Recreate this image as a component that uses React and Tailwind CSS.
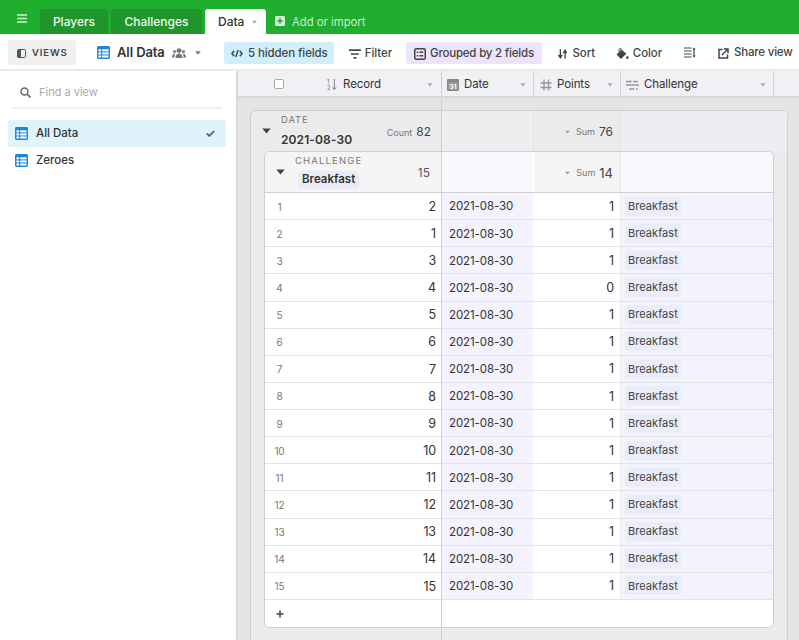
import React from "react";

const Caret = ({ className = "" }) => (
  <svg viewBox="0 0 8 5" className={className}><path d="M0.3 0.3h7.4L4 4.8z" fill="currentColor" /></svg>
);

const TableIcon = ({ className = "" }) => (
  <svg viewBox="0 0 14 14" className={className}>
    <rect x="0" y="0" width="14" height="14" rx="1.5" fill="#1f86dc" />
    <rect x="1.5" y="3.6" width="3" height="2.2" fill="#fff" />
    <rect x="5.6" y="3.6" width="6.9" height="2.2" fill="#fff" />
    <rect x="1.5" y="6.9" width="3" height="2.2" fill="#fff" />
    <rect x="5.6" y="6.9" width="6.9" height="2.2" fill="#fff" />
    <rect x="1.5" y="10.2" width="3" height="2.2" fill="#fff" />
    <rect x="5.6" y="10.2" width="6.9" height="2.2" fill="#fff" />
  </svg>
);

const ToolButton = ({ icon, label, className = "" }) => (
  <div className={`flex items-center h-[22px] pt-[2px] shrink-0 whitespace-nowrap rounded-[3px] text-[11.5px] font-medium text-[#444] ${className}`}>
    {icon}
    <span>{label}</span>
  </div>
);

const HeaderCell = ({ icon, label, className = "" }) => (
  <div className={`flex items-center pt-[2px] border-r border-[#d5d5d5] text-[11.5px] tracking-[-0.1px] text-[#333] ${className}`}>
    {icon}
    <span>{label}</span>
    <Caret className="w-[6px] h-[4px] ml-auto mr-[7px] text-[#b0b0b0]" />
  </div>
);

const records = [2, 1, 3, 4, 5, 6, 7, 8, 9, 10, 11, 12, 13, 14, 15];
const points = [1, 1, 1, 0, 1, 1, 1, 1, 1, 1, 1, 1, 1, 1, 1];

const Row = ({ n, rec, pts }) => (
  <div className="flex h-[27.13px] border-b border-[#e3e3e3] text-[11.5px] tracking-[-0.1px] text-[#333] bg-white">
    <div className="w-[177px] flex items-center justify-between pt-[2px] pl-[7px] pr-[5px] border-r border-[#cfcfcf]">
      <span className="w-[15px] text-center text-[10px] text-[#777]">{n}</span>
      <span className="text-[12.5px] leading-none">{rec}</span>
    </div>
    <div className="w-[92px] flex items-center pt-[2px] pl-[7px] bg-[#f4f2fd] border-r-[1px] border-white">2021-08-30</div>
    <div className="w-[87px] flex items-center justify-end pt-[2px] pr-[6px] border-r border-[#e9e9e9] text-[12.5px]">{pts}</div>
    <div className="flex-1 flex items-center pl-[4px] bg-[#f4f2fd]">
      <span className="h-[19px] flex items-center px-[3px] rounded-[3px] bg-[#eaedf9] text-[11px] tracking-[0.05px] text-[#444]">Breakfast</span>
    </div>
  </div>
);

export default function App() {
  return (
    <div className="w-[799px] h-[640px] overflow-hidden flex flex-col bg-white font-['Inter',sans-serif]">
      {/* Green bar */}
      <div className="h-[34px] shrink-0 bg-[#20ae2f] flex items-end">
        <div className="w-[40px] h-[34px] flex items-center justify-center pt-[9px] pb-[6px]">
          <svg viewBox="0 0 10 9" className="w-[10px] h-[9px] ml-[3px]"><path d="M0 1h10M0 4.500h10M0 8h10" stroke="#d6f2d9" strokeWidth="1.3" /></svg>
        </div>
        <div className="w-[68px] h-[25px] pt-[1px] rounded-t-[3px] bg-[#1e962b] flex items-center justify-center text-[12px] font-medium text-[#eef9ef]">Players</div>
        <div className="w-[91px] h-[25px] pt-[1px] ml-[3px] rounded-t-[3px] bg-[#1e962b] flex items-center justify-center text-[12px] font-medium text-[#eef9ef]">Challenges</div>
        <div className="w-[61px] h-[25px] pt-[1px] ml-[3px] rounded-t-[3px] bg-white flex items-center pl-[13px] text-[12px] font-medium text-[#333]">
          Data
          <Caret className="w-[5px] h-[4px] ml-[8px] text-[#999]" />
        </div>
        <div className="h-[25px] pt-[1px] ml-[9px] flex items-center text-[11.3px] text-[#c9eccc]">
          <svg viewBox="0 0 10 10" className="w-[10px] h-[10px] mr-[7px] -mt-[2px]">
            <rect width="10" height="10" rx="1.5" fill="#d6f2d9" />
            <path d="M5 2.200v5.600M2.200 5h5.600" stroke="#20ae2f" strokeWidth="1.6" />
          </svg>
          Add or import
        </div>
      </div>

      {/* Toolbar */}
      <div className="h-[37px] shrink-0 flex items-center pt-[2px] border-b-2 border-[#e9e9e9] bg-white tracking-[-0.1px]">
        <div className="ml-[8px] w-[68px] h-[25px] pt-[1px] shrink-0 rounded-[3px] bg-[#f0f0f0] flex items-center pl-[9px]">
          <svg viewBox="0 0 9 9" className="w-[9px] h-[9px]">
            <rect x="0.500" y="0.500" width="8" height="8" rx="1.2" fill="none" stroke="#555" />
            <rect x="0.500" y="0.500" width="3.500" height="8" fill="#555" />
          </svg>
          <span className="ml-[6px] text-[9.5px] font-semibold tracking-[0.9px] text-[#444]">VIEWS</span>
        </div>
        <TableIcon className="ml-[21px] w-[13px] h-[13px] shrink-0" />
        <span className="ml-[7px] w-[48px] shrink-0 whitespace-nowrap text-[13px] font-semibold text-[#333]">All Data</span>
        <svg viewBox="0 0 14 10" className="ml-[7px] mt-[1px] w-[14px] h-[10px] shrink-0">
          <circle cx="7" cy="2.600" r="2.400" fill="#777" />
          <circle cx="2.600" cy="3.600" r="1.700" fill="#888" />
          <circle cx="11.400" cy="3.600" r="1.700" fill="#888" />
          <path d="M3.500 10c0-3 1.500-4.600 3.500-4.600s3.500 1.600 3.500 4.600zM0 9.500c0-2.400 1-3.700 2.600-3.700l.6.300C2.600 7 2.500 8.300 2.500 9.500zM14 9.500c0-2.400-1-3.700-2.600-3.700l-.6.300c.6.900.7 2.200.7 3.400z" fill="#777" />
        </svg>
        <Caret className="ml-[9px] w-[6px] h-[4px] text-[#777] shrink-0" />

        <ToolButton
          className="ml-[23px] w-[110px] bg-[#d1effb] pl-[7px]"
          label="5 hidden fields"
          icon={
            <svg viewBox="0 0 13 9" className="w-[12px] h-[9px] mr-[5px]">
              <path d="M3.500 1.500L1 4.500l2.500 3M9.500 1.500L12 4.500l-2.500 3M7.800 0.800L5.200 8.200" fill="none" stroke="#444" strokeWidth="1.6" />
            </svg>
          }
        />
        <ToolButton
          className="ml-[15px] w-[43px]"
          label="Filter"
          icon={
            <svg viewBox="0 0 12 10" className="w-[12px] h-[10px] mr-[4px]">
              <path d="M0 1h12M2 5h8M4.500 9h3" stroke="#444" strokeWidth="1.7" />
            </svg>
          }
        />
        <ToolButton
          className="ml-[14px] w-[136px] bg-[#ece4fb] pl-[8px] tracking-[-0.2px]"
          label="Grouped by 2 fields"
          icon={
            <svg viewBox="0 0 12 12" className="w-[12px] h-[12px] mr-[4px]">
              <rect x="0.750" y="0.750" width="10.500" height="10.500" rx="1.500" fill="none" stroke="#444" strokeWidth="1.500" />
              <path d="M2.800 4.200h1.500M5.500 4.200h3.700M2.800 7.800h1.500M5.500 7.800h3.700" stroke="#444" strokeWidth="1.500" />
            </svg>
          }
        />
        <ToolButton
          className="ml-[16px] w-[37px]"
          label="Sort"
          icon={
            <svg viewBox="0 0 10 10" className="w-[10px] h-[10px] mr-[5px]">
              <path d="M2.500 0v8M0.500 6l2 3 2-3M7.500 10V2M5.500 4l2-3 2 3" fill="none" stroke="#444" strokeWidth="1.400" />
            </svg>
          }
        />
        <ToolButton
          className="ml-[21px] w-[46px]"
          label="Color"
          icon={
            <svg viewBox="0 0 13 12" className="w-[13px] h-[12px] mr-[4px]">
              <path d="M3 3.500V1.800a1.300 1.300 0 0 1 2.600 0V3" fill="none" stroke="#444" strokeWidth="1" />
              <path d="M5.500 1.500L0.500 6.500 5 11l5.500-5.200z" fill="#444" />
              <path d="M11.500 7.500c.7 1 1.200 1.700 1.200 2.300a1.200 1.200 0 0 1-2.400 0c0-.6.500-1.300 1.200-2.300z" fill="#444" />
            </svg>
          }
        />
        <svg viewBox="0 0 12 11" className="ml-[22px] w-[12px] h-[11px] shrink-0">
          <path d="M0 1h7.500M0 4h7.500M0 7h7.500M0 10h7.500M10 1v9" stroke="#444" strokeWidth="1.200" />
          <path d="M8.500 2.500L10 0.500l1.500 2zM8.500 8.500L10 10.500l1.500-2z" fill="#444" />
        </svg>
        <ToolButton
          className="ml-[22px] -mt-[2px] tracking-[-0.2px]"
          label="Share view"
          icon={
            <svg viewBox="0 0 11 11" className="w-[11px] h-[11px] mr-[5px] mt-[2px]">
              <path d="M4.500 1.500H1v8.500h8.500V6.500" fill="none" stroke="#444" strokeWidth="1.500" />
              <path d="M4 7l5-5M5.800 1h4.200v4.200" fill="none" stroke="#444" strokeWidth="1.500" />
            </svg>
          }
        />
      </div>

      <div className="flex-1 flex min-h-0">
        {/* Sidebar */}
        <div className="w-[238px] shrink-0 border-r-2 border-[#d9d9d9] bg-white pl-[8px] pr-[10px]">
          <div className="mx-[4px] h-[30px] box-content flex items-center border-b-2 border-[#f0f0f0] pl-[8px] pt-[6px]">
            <svg viewBox="0 0 11 11" className="w-[11px] h-[11px]">
              <circle cx="4.500" cy="4.500" r="3.500" fill="none" stroke="#666" strokeWidth="1.400" />
              <path d="M7 7l3.500 3.500" stroke="#666" strokeWidth="1.600" />
            </svg>
            <span className="ml-[8px] text-[11px] text-[#aaa]">Find a view</span>
          </div>
          <div className="mt-[11px] h-[27px] rounded-[3px] bg-[#dff3fb] flex items-center pl-[7px] pr-[11px] text-[11.5px] font-medium text-[#333]">
            <TableIcon className="w-[13px] h-[13px] mr-[8px]" />
            All Data
            <svg viewBox="0 0 9 7" className="ml-auto w-[9px] h-[7px]"><path d="M0.800 3.500l2.500 2.400L8.200 1" fill="none" stroke="#555" strokeWidth="1.700" /></svg>
          </div>
          <div className="h-[27px] flex items-center pl-[7px] text-[11.5px] font-medium text-[#333]">
            <TableIcon className="w-[13px] h-[13px] mr-[8px]" />
            Zeroes
          </div>
        </div>

        {/* Grid */}
        <div className="flex-1 min-w-0 flex flex-col bg-[#e4e4e4]">
          <div className="h-[25px] shrink-0 flex bg-[#f1f0f4] border-b-2 border-[#d8d8d8] box-content">
            <div className="w-[204px] flex items-center pt-[2px] border-r border-[#cfcfcf]">
              <div className="ml-[36px] w-[10px] h-[10px] -mt-[2px] border border-[#aaa] rounded-[2px] bg-white" />
              <svg viewBox="0 0 12 13" className="ml-[43px] w-[11px] h-[13px] mr-[5px]">
                <text x="0" y="6" fontSize="6" fill="#666" fontFamily="Inter, sans-serif">1</text>
                <text x="0" y="12.500" fontSize="6" fill="#666" fontFamily="Inter, sans-serif">2</text>
                <path d="M8 0.500v11M6 9.500l2 2.500 2-2.500" fill="none" stroke="#777" strokeWidth="1" />
              </svg>
              <span className="text-[11.5px] tracking-[-0.1px] text-[#333]">Record</span>
              <Caret className="w-[6px] h-[4px] ml-auto mr-[8px] text-[#b0b0b0]" />
            </div>
            <HeaderCell
              className="w-[92px]"
              label="Date"
              icon={
                <svg viewBox="0 0 12 12" className="w-[12px] h-[12px] ml-[5px] mr-[5px]">
                  <rect width="12" height="12" rx="1" fill="#888" />
                  <rect x="1" y="3" width="10" height="8" fill="#9a9a9a" />
                  <text x="6" y="10" textAnchor="middle" fontSize="6.500" fontWeight="700" fill="#fff" fontFamily="Inter, sans-serif">31</text>
                </svg>
              }
            />
            <HeaderCell
              className="w-[87px]"
              label="Points"
              icon={
                <svg viewBox="0 0 12 12" className="w-[12px] h-[12px] ml-[6px] mr-[5px]">
                  <path d="M4 0.500v11M8.500 0.500v11M0.500 4h11M0.500 8.500h11" stroke="#999" strokeWidth="1.400" />
                </svg>
              }
            />
            <HeaderCell
              className="w-[153px]"
              label="Challenge"
              icon={
                <svg viewBox="0 0 13 10" className="w-[13px] h-[10px] ml-[5px] mr-[5px]">
                  <path d="M0 1.500h4M7 1.500h5M0 5h13M3 9h5.500M10 9h2" stroke="#999" strokeWidth="1.400" />
                  <path d="M4 0v3L6 1.500z" fill="#999" />
                </svg>
              }
            />
            <div className="flex-1" />
          </div>

          {/* Grid body */}
          <div className="relative flex-1 min-h-0 overflow-hidden pt-[12px] pl-[12px] pr-[11px]">
            {/* Outer group */}
            <div className="rounded-t-[6px] border border-[#cfcfcf] bg-[#ebebeb] pb-[12px]">
              <div className="h-[40px] flex">
                <div className="w-[191px] shrink-0 relative flex items-center pl-[11px]">
                  <Caret className="w-[9px] h-[6px] text-[#444]" />
                  <div className="ml-[10px] flex flex-col">
                    <span className="text-[9.5px] leading-[12px] tracking-[0.9px] text-[#777]">DATE</span>
                    <span className="mt-[6px] text-[12px] leading-[16px] font-semibold tracking-[0.1px] text-[#333]">2021-08-30</span>
                  </div>
                  <span className="ml-auto mr-[11px] pt-[1px] flex items-baseline">
                    <span className="text-[9px] text-[#777] mr-[4px]">Count</span>
                    <span className="text-[12px] text-[#444]">82</span>
                  </span>
                </div>
                <div className="w-[92px] shrink-0 bg-[#eeedf0] border-r border-[#e4e4e4]" />
                <div className="w-[87px] shrink-0 flex items-center justify-end pt-[2px] pr-[7px] border-r border-[#e6e6e6] bg-[#ebebeb]">
                  <Caret className="w-[5px] h-[4px] text-[#999] mr-[6px]" />
                  <span className="text-[9px] text-[#777] mr-[4px]">Sum</span>
                  <span className="text-[12px] text-[#444]">76</span>
                </div>
                <div className="flex-1 bg-[#eeedf3]" />
              </div>

              {/* Inner group */}
              <div className="ml-[13px] mr-[13px] rounded-[6px] border border-[#cfcfcf] overflow-hidden bg-white">
                <div className="h-[40px] flex border-b border-[#cfcfcf] box-content">
                  <div className="w-[177px] shrink-0 flex items-center pl-[11px] bg-[#f5f5f5] border-r border-[#cfcfcf]">
                    <Caret className="w-[9px] h-[6px] text-[#444]" />
                    <div className="ml-[10px] flex flex-col items-start">
                      <span className="text-[9.5px] leading-[12px] tracking-[1.15px] text-[#777]">CHALLENGE</span>
                      <span className="mt-[4px] ml-[3px] h-[18px] flex items-center px-[4px] rounded-[3px] bg-[#e9ecf7] text-[11.5px] font-semibold text-[#333]">Breakfast</span>
                    </div>
                    <span className="ml-auto mr-[11px] pt-[1px] text-[12px] text-[#555]">15</span>
                  </div>
                  <div className="w-[92px] shrink-0 bg-[#f9f8fd] border-r border-white" />
                  <div className="w-[87px] shrink-0 flex items-center justify-end pt-[2px] pr-[7px] bg-[#f5f5f5] border-r border-[#e9e9e9]">
                    <Caret className="w-[5px] h-[4px] text-[#999] mr-[6px]" />
                    <span className="text-[9px] text-[#777] mr-[4px]">Sum</span>
                    <span className="text-[13px] leading-none text-[#444]">14</span>
                  </div>
                  <div className="flex-1 bg-[#f9f8fd]" />
                </div>
                {records.map((rec, i) => (
                  <Row key={i} n={i + 1} rec={rec} pts={points[i]} />
                ))}
                <div className="h-[27px] flex bg-white">
                  <div className="w-[177px] flex items-center pt-[1px] pl-[11px] border-r border-[#cfcfcf]">
                    <svg viewBox="0 0 8 8" className="w-[8px] h-[8px]"><path d="M4 0.500v7M0.500 4h7" stroke="#444" strokeWidth="1.500" /></svg>
                  </div>
                </div>
              </div>
            </div>
            {/* frozen column edge running through the groups */}
            <div className="absolute left-[203px] top-[0px] bottom-0 w-px bg-[#cfcfcf] pointer-events-none" />
          </div>
        </div>
      </div>
    </div>
  );
}
